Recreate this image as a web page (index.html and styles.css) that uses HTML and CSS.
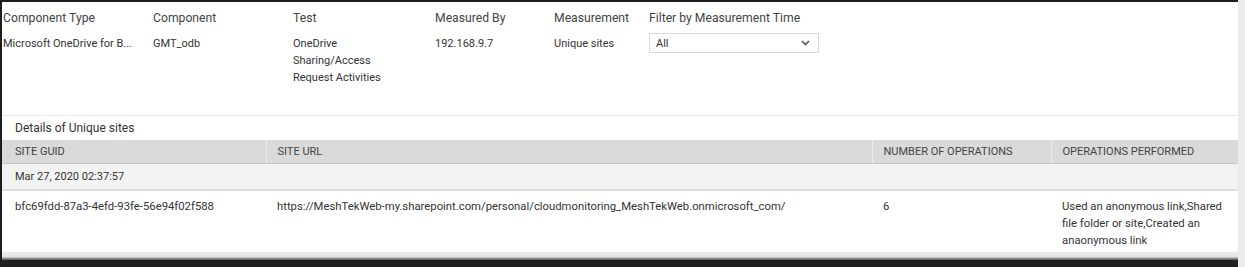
FILE: index.html
```html
<!DOCTYPE html>
<html lang="en">
<head>
    <meta charset="UTF-8">
    <title>Details of Unique sites</title>
    <link rel="stylesheet" href="styles.css">
</head>
<body>
    <div class="window">
        <div class="summary">
            <div class="label">Component Type</div>
            <div class="label">Component</div>
            <div class="label">Test</div>
            <div class="label">Measured By</div>
            <div class="label">Measurement</div>
            <div class="label">Filter by Measurement Time</div>

            <div class="value">Microsoft OneDrive for B...</div>
            <div class="value">GMT_odb</div>
            <div class="value">OneDrive<br>Sharing/Access<br>Request Activities</div>
            <div class="value">192.168.9.7</div>
            <div class="value">Unique sites</div>
            <div class="filter">
                <div class="select">
                    <span>All</span>
                    <svg width="9" height="6" viewBox="0 0 9 6"><path d="M1 1l3.5 3.5L8 1" fill="none" stroke="#555" stroke-width="1.6"/></svg>
                </div>
            </div>
        </div>

        <div class="section-title">Details of Unique sites</div>

        <table class="grid">
            <colgroup>
                <col class="c-guid">
                <col class="c-url">
                <col class="c-num">
                <col>
            </colgroup>
            <thead>
                <tr>
                    <th>SITE GUID</th>
                    <th>SITE URL</th>
                    <th>NUMBER OF OPERATIONS</th>
                    <th>OPERATIONS PERFORMED</th>
                </tr>
            </thead>
            <tbody>
                <tr class="group">
                    <td colspan="4">Mar 27, 2020 02:37:57</td>
                </tr>
                <tr class="row">
                    <td>bfc69fdd-87a3-4efd-93fe-56e94f02f588</td>
                    <td>https://MeshTekWeb-my.sharepoint.com/personal/cloudmonitoring_MeshTekWeb.onmicrosoft_com/</td>
                    <td>6</td>
                    <td>Used an anonymous link,Shared file folder or site,Created an anaonymous link</td>
                </tr>
            </tbody>
        </table>

        <div class="track"></div>
    </div>
</body>
</html>
```
FILE: styles.css
```css
body {
    margin: 0;
    height: 267px;
    background: linear-gradient(to right, #8f8f8f, #c4c4c4 2px, #dcdcdc 4px, #ececec);
    font-family: Roboto, "Liberation Sans", sans-serif;
    color: #3d3d3d;
}
.window {
    width: 1238px;
    height: 267px;
    box-sizing: border-box;
    border-top: 2px solid #1e1e1e;
    border-left: 2px solid #1e1e1e;
    border-bottom: 7px solid #202020;
    background: #fff;
    display: flex;
    flex-direction: column;
    overflow: hidden;
}

/* top summary */
.summary {
    height: 114px;
    box-sizing: border-box;
    border-bottom: 1px solid #ececec;
    padding: 8px 0 0 1px;
    display: grid;
    grid-template-columns: 150px 140px 142px 119px 95px 1fr;
    grid-template-rows: 17px auto;
    row-gap: 6px;
    align-items: start;
}
.label {
    font-size: 12.2px;
    line-height: 17px;
    color: #444;
}
.value {
    font-size: 11px;
    line-height: 17px;
    padding-top: 2px;
    color: #333;
}
.select {
    width: 170px;
    height: 20px;
    box-sizing: border-box;
    border: 1px solid #d3dbe3;
    display: flex;
    align-items: center;
    justify-content: space-between;
    padding: 0 8px 0 6px;
    font-size: 11px;
    color: #333;
}

.section-title {
    height: 24px;
    line-height: 24px;
    padding-left: 13px;
    font-size: 12px;
    color: #333;
}

/* details table */
.grid {
    width: 1236px;
    border-collapse: collapse;
    table-layout: fixed;
    font-size: 11px;
    color: #333;
}
.c-guid { width: 264px; }
.c-url { width: 606px; }
.c-num { width: 179px; }
.grid th {
    height: 23px;
    background: #dadada;
    border-bottom: 1px solid #c6c6c6;
    border-left: 1px solid #ececec;
    font-weight: 400;
    text-align: left;
    padding: 0 11px;
    color: #444;
}
.grid th:first-child { border-left: none; padding-left: 13px; }
.group td {
    height: 25px;
    background: #f3f3f3;
    border-bottom: 2px solid #dedede;
    padding: 0 13px;
}
.row td {
    vertical-align: top;
    font-size: 11.3px;
    line-height: 17px;
    padding: 7px 11px 0;
    height: 54px;
}
.row td:first-child { padding-left: 13px; }

.track {
    flex: 1;
    background: linear-gradient(to bottom, #ebebeb 0, #e3e3e3 5px, #a0a0a0 6px, #5a5a5a 8px);
}
```
